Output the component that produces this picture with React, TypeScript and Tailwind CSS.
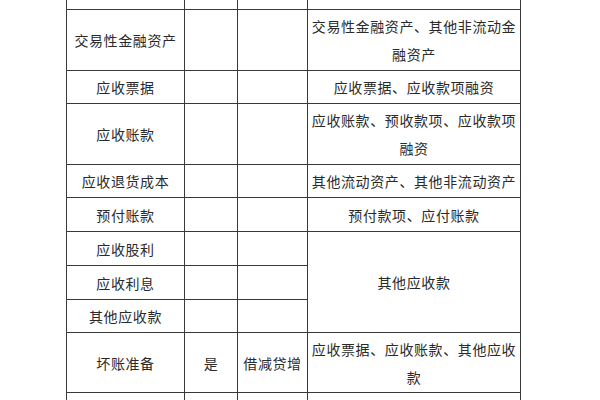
import React from "react";

const cell =
  "bg-white flex items-center justify-center text-center px-0.5";

export default function App() {
  return (
    <div className="w-[600px] h-[400px] overflow-hidden bg-white">
      <div
        className="ml-[66px] mt-[-1px] w-[455px] grid grid-cols-[117px_52px_69px_212px] grid-rows-[9px_60px_32px_60px_32px_33px_33px_33px_32px_59px_40px] gap-px bg-[#3a3a3a] p-px text-[14px] leading-[28px] tracking-[0.6px] text-[#2a2a2a]"
        style={{ fontFamily: '"Noto Sans CJK SC", "Noto Sans", sans-serif' }}
      >
        {/* partial top row */}
        <div className={cell}></div>
        <div className={cell}></div>
        <div className={cell}></div>
        <div className={cell}></div>

        <div className={cell}>交易性金融资产</div>
        <div className={cell}></div>
        <div className={cell}></div>
        <div className={cell}>交易性金融资产、其他非流动金融资产</div>

        <div className={cell}>应收票据</div>
        <div className={cell}></div>
        <div className={cell}></div>
        <div className={cell}>应收票据、应收款项融资</div>

        <div className={cell}>应收账款</div>
        <div className={cell}></div>
        <div className={cell}></div>
        <div className={cell}>应收账款、预收款项、应收款项融资</div>

        <div className={cell}>应收退货成本</div>
        <div className={cell}></div>
        <div className={cell}></div>
        <div className={cell}>其他流动资产、其他非流动资产</div>

        <div className={cell}>预付账款</div>
        <div className={cell}></div>
        <div className={cell}></div>
        <div className={cell}>预付款项、应付账款</div>

        <div className={cell}>应收股利</div>
        <div className={cell}></div>
        <div className={cell}></div>
        <div className={`${cell} row-span-3`}>其他应收款</div>

        <div className={cell}>应收利息</div>
        <div className={cell}></div>
        <div className={cell}></div>

        <div className={cell}>其他应收款</div>
        <div className={cell}></div>
        <div className={cell}></div>

        <div className={cell}>坏账准备</div>
        <div className={cell}>是</div>
        <div className={cell}>借减贷增</div>
        <div className={cell}>应收票据、应收账款、其他应收款</div>

        {/* partial bottom row */}
        <div className={cell}></div>
        <div className={cell}></div>
        <div className={cell}></div>
        <div className={cell}></div>
      </div>
    </div>
  );
}
